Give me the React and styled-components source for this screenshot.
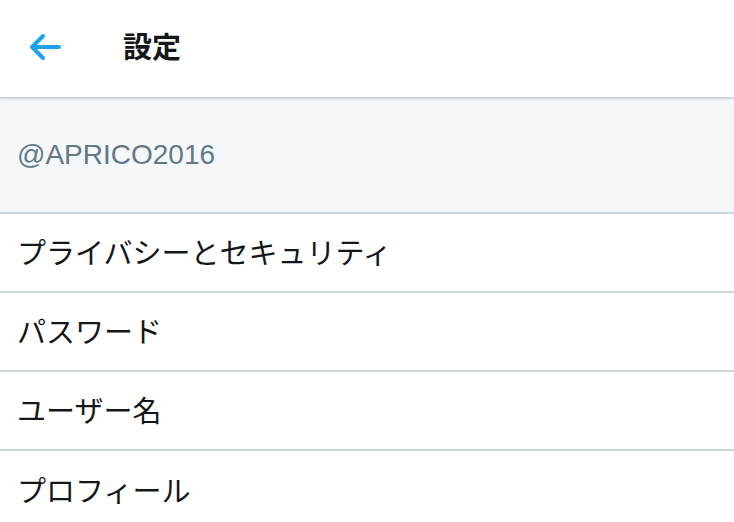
import React from 'react'
import styled, { createGlobalStyle } from 'styled-components'

const GlobalStyle = createGlobalStyle`
  html, body {
    margin: 0;
    padding: 0;
    background: #ffffff;
    font-family: "Noto Sans CJK JP", "Noto Sans", sans-serif;
  }
`

const Page = styled.div`
  width: 734px;
  height: 522px;
  overflow: hidden;
  display: flex;
  flex-direction: column;
`

const Header = styled.header`
  position: relative;
  z-index: 1;
  height: 97px;
  flex: none;
  display: flex;
  align-items: center;
  padding-bottom: 3px;
  box-sizing: border-box;
  background: #ffffff;
  box-shadow: 0 1px 3px rgba(101, 119, 134, 0.5);
`

const BackButton = styled.button`
  width: 123px;
  height: 100%;
  padding: 0 0 0 28px;
  border: none;
  background: none;
  display: flex;
  align-items: center;
  color: #1da1f2;
`

const Title = styled.h1`
  margin: 0 0 4px;
  font-size: 29px;
  font-weight: 700;
  color: #14171a;
  line-height: 1;
`

const AccountBar = styled.div`
  height: 115px;
  flex: none;
  display: flex;
  align-items: center;
  padding: 0 17px;
  background: #f5f8fa;
  border-bottom: 2px solid #ccd6dd;
  color: #657786;
  font-family: "Liberation Sans", "Noto Sans", sans-serif;
  font-size: 28px;
`

const Row = styled.div`
  height: 79px;
  flex: none;
  display: flex;
  align-items: center;
  padding: 0 17px 3px;
  box-sizing: border-box;
  border-bottom: 2px solid #ccd6dd;
  font-size: 29px;
  color: #14171a;
  &:last-child {
    border-bottom: none;
  }
`

const items = ['プライバシーとセキュリティ', 'パスワード', 'ユーザー名', 'プロフィール']

const BackArrow = () => (
  <svg width="34" height="30" viewBox="0 0 34 30" fill="none">
    <path
      d="M31 15 H4 M15 4 L4 15 L15 26"
      stroke="currentColor"
      strokeWidth="4"
      strokeLinecap="round"
      strokeLinejoin="round"
    />
  </svg>
)

export default function App() {
  return (
    <Page>
      <GlobalStyle />
      <Header>
        <BackButton aria-label="戻る">
          <BackArrow />
        </BackButton>
        <Title>設定</Title>
      </Header>
      <AccountBar>@APRICO2016</AccountBar>
      {items.map(label => (
        <Row key={label}>{label}</Row>
      ))}
    </Page>
  )
}
